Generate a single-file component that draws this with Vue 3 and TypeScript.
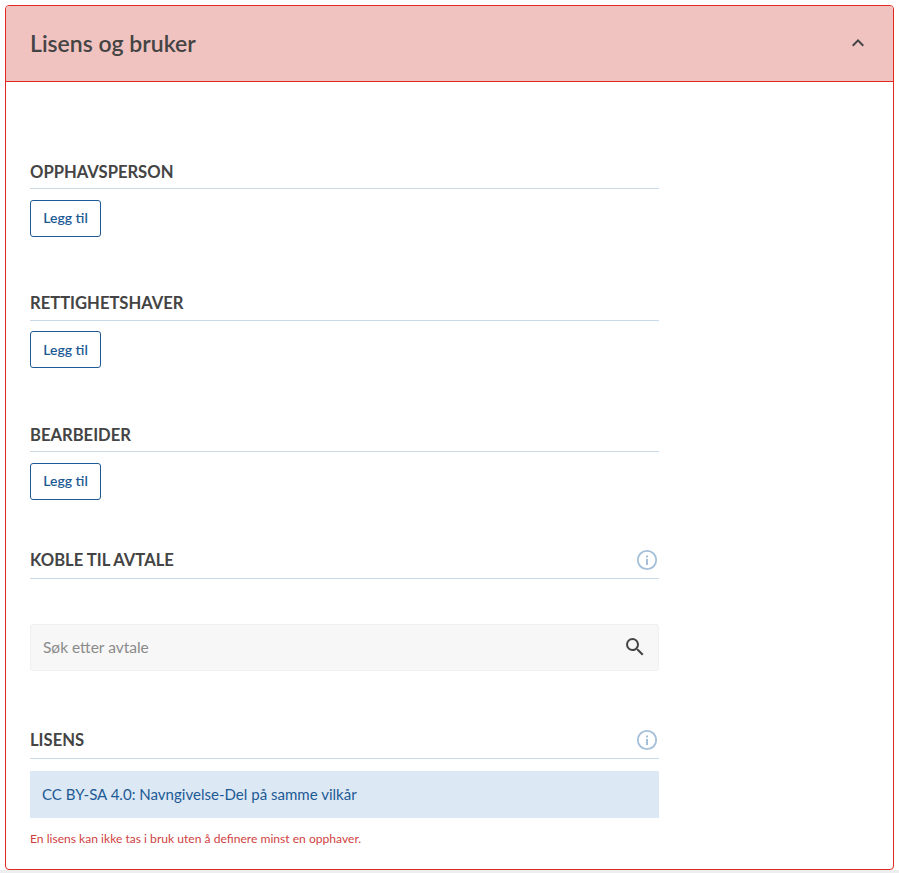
<script setup lang="ts">
const contributors = ['OPPHAVSPERSON', 'RETTIGHETSHAVER', 'BEARBEIDER']
</script>

<template>
  <div class="page">
    <section class="panel">
      <header class="panel-header">
        <h1>Lisens og bruker</h1>
        <svg class="chevron" width="24" height="24" viewBox="0 0 24 24">
          <path d="M7.41 15.41 12 10.83l4.59 4.58L18 14l-6-6-6 6z" fill="#444" />
        </svg>
      </header>

      <div class="panel-body">
        <div v-for="title in contributors" :key="title" class="contributor">
          <h2 class="section-title">{{ title }}</h2>
          <button class="add-btn" type="button">Legg til</button>
        </div>

        <div class="agreement">
          <h2 class="section-title with-icon">
            KOBLE TIL AVTALE
            <svg class="info" width="22" height="22" viewBox="0 0 22 22">
              <circle cx="11" cy="11" r="9.2" fill="none" stroke="#a5bfd9" stroke-width="1.8" />
              <rect x="10" y="10" width="2" height="6" fill="#a5bfd9" />
              <rect x="10" y="6.5" width="2" height="2" fill="#a5bfd9" />
            </svg>
          </h2>
          <div class="search">
            <span class="placeholder">Søk etter avtale</span>
            <svg class="search-icon" width="24" height="24" viewBox="0 0 24 24">
              <path
                d="M15.5 14h-.79l-.28-.27A6.47 6.47 0 0 0 16 9.5 6.5 6.5 0 1 0 9.5 16c1.61 0 3.09-.59 4.23-1.57l.27.28v.79l5 4.99L20.49 19l-4.99-5zm-6 0C7.01 14 5 11.99 5 9.5S7.01 5 9.5 5 14 7.01 14 9.5 11.99 14 9.5 14z"
                fill="#444"
              />
            </svg>
          </div>
        </div>

        <div class="license">
          <h2 class="section-title with-icon">
            LISENS
            <svg class="info" width="22" height="22" viewBox="0 0 22 22">
              <circle cx="11" cy="11" r="9.2" fill="none" stroke="#a5bfd9" stroke-width="1.8" />
              <rect x="10" y="10" width="2" height="6" fill="#a5bfd9" />
              <rect x="10" y="6.5" width="2" height="2" fill="#a5bfd9" />
            </svg>
          </h2>
          <div class="license-value">CC BY-SA 4.0: Navngivelse-Del på samme vilkår</div>
          <p class="error">En lisens kan ikke tas i bruk uten å definere minst en opphaver.</p>
        </div>
      </div>
    </section>
  </div>
</template>

<style>
html,
body {
  margin: 0;
  background: #fff;
}
</style>

<style scoped>
.page {
  box-sizing: border-box;
  width: 899px;
  height: 873px;
  padding: 5px 5px 0;
  font-family: 'Lato', 'Noto Sans', sans-serif;
  overflow: hidden;
  background: linear-gradient(#fff 870px, #eceef0 870px);
}

.panel {
  box-sizing: border-box;
  width: 889px;
  height: 865px;
  border: 1px solid #e0281f;
  border-radius: 4px;
  background: #fff;
  overflow: hidden;
}

.panel-header {
  box-sizing: border-box;
  height: 76px;
  padding: 0 23px 0 24px;
  display: flex;
  align-items: center;
  justify-content: space-between;
  background: #f1c3c0;
  border-bottom: 1px solid #e0281f;
  color: #444;
}

.panel-header h1 {
  margin: 0 0 1px;
  font-size: 23px;
  font-weight: 600;
}

.chevron {
  margin-bottom: 1px;
}

.panel-body {
  width: 629px;
  padding: 75px 0 0 24px;
}

.contributor {
  height: 131.5px;
}

.section-title {
  box-sizing: border-box;
  height: 32px;
  margin: 0;
  padding-bottom: 2px;
  display: flex;
  align-items: center;
  justify-content: space-between;
  border-bottom: 1px solid #c9d9e8;
  font-size: 16.6px;
  font-weight: 700;
  color: #444;
}

.add-btn {
  display: block;
  box-sizing: border-box;
  width: 71px;
  height: 37px;
  margin-top: 10.5px;
  padding: 0 0 1px;
  border: 1px solid #1d5a94;
  border-radius: 3px;
  background: #fff;
  color: #1d5a94;
  font-family: inherit;
  font-size: 14px;
  font-weight: 600;
}

.agreement {
  margin-top: -8.5px;
}

.with-icon {
  height: 36px;
  padding-bottom: 1px;
}

.info {
  margin: 0 1px 0 0;
}

.search {
  box-sizing: border-box;
  height: 47px;
  margin-top: 45px;
  padding: 0 12px;
  display: flex;
  align-items: center;
  justify-content: space-between;
  background: #f7f7f7;
  border: 1px solid #f0f0f0;
  border-radius: 3px;
  color: #8a8a8a;
  font-size: 15.5px;
}

.placeholder {
  margin-bottom: 2px;
}

.search-icon {
  margin: 0 -1px 2px 0;
}

.license {
  margin-top: 51.5px;
}

.license-value {
  box-sizing: border-box;
  height: 47px;
  margin-top: 12px;
  padding: 0 12px;
  display: flex;
  align-items: center;
  background: #dce8f4;
  color: #1d5a94;
  font-size: 15.05px;
}

.error {
  margin: 13px 0 0;
  color: #cf3f3f;
  font-size: 12.1px;
}
</style>
